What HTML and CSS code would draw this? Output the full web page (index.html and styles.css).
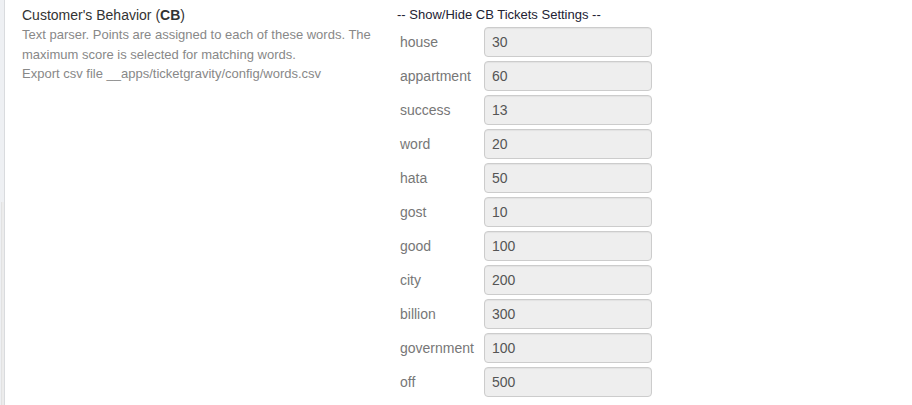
FILE: index.html
```html
<!DOCTYPE html>
<html>
<head>
<meta charset="utf-8">
<link rel="stylesheet" href="styles.css">
</head>
<body>
<div class="page">
  <div class="rail"><div class="rail-inner"></div></div>
  <div class="content">
    <div class="info">
      <div class="title">Customer's Behavior (<b>CB</b>)</div>
      <div class="desc">Text parser. Points are assigned to each of these words. The maximum score is selected for matching words.<br>Export csv file __apps/ticketgravity/config/words.csv</div>
    </div>
    <div class="settings">
      <div class="heading">-- Show/Hide CB Tickets Settings --</div>
      <div class="rows">
        <div class="row"><span class="label">house</span><div class="field">30</div></div>
        <div class="row"><span class="label">appartment</span><div class="field">60</div></div>
        <div class="row"><span class="label">success</span><div class="field">13</div></div>
        <div class="row"><span class="label">word</span><div class="field">20</div></div>
        <div class="row"><span class="label">hata</span><div class="field">50</div></div>
        <div class="row"><span class="label">gost</span><div class="field">10</div></div>
        <div class="row"><span class="label">good</span><div class="field">100</div></div>
        <div class="row"><span class="label">city</span><div class="field">200</div></div>
        <div class="row"><span class="label">billion</span><div class="field">300</div></div>
        <div class="row"><span class="label">government</span><div class="field">100</div></div>
        <div class="row"><span class="label">off</span><div class="field">500</div></div>
      </div>
    </div>
  </div>
</div>
</body>
</html>
```
FILE: styles.css
```css
html, body {
  margin: 0;
  padding: 0;
  background: #fff;
  font-family: "Liberation Sans", Arial, sans-serif;
}
.page {
  display: flex;
  width: 912px;
  height: 405px;
  overflow: hidden;
}
.rail {
  width: 4px;
  flex: none;
  background: #eef0f3;
  border-right: 1px solid #d9dbde;
  display: flex;
  flex-direction: column;
  justify-content: flex-end;
}
.rail-inner {
  height: 203px;
  margin-left: 1px;
  border-left: 1px solid #e2e2e2;
  background: #ececec;
}
.content {
  display: flex;
  padding-top: 5px;
}
.info {
  width: 392px;
  padding-left: 17px;
  box-sizing: border-box;
}
.title {
  font-size: 14px;
  line-height: 20px;
  color: #333;
}
.title b {
  font-weight: bold;
}
.desc {
  font-size: 13px;
  line-height: 19.5px;
  color: #888;
  width: 360px;
}
.settings {
  width: 260px;
}
.heading {
  font-size: 13px;
  line-height: 20px;
  color: #222233;
  margin-bottom: 2px;
}
.rows {
  display: flex;
  flex-direction: column;
  gap: 4px;
}
.row {
  display: flex;
  align-items: center;
  height: 30px;
}
.label {
  width: 87px;
  padding-left: 3px;
  box-sizing: border-box;
  font-size: 14px;
  color: #777;
}
.field {
  width: 168px;
  height: 30px;
  box-sizing: border-box;
  border: 1px solid #cccccc;
  border-radius: 4px;
  background: #eeeeee;
  padding: 0 7px;
  font-size: 14px;
  line-height: 28px;
  color: #555;
  box-shadow: inset 0 1px 1px rgba(0,0,0,0.05);
}
```
